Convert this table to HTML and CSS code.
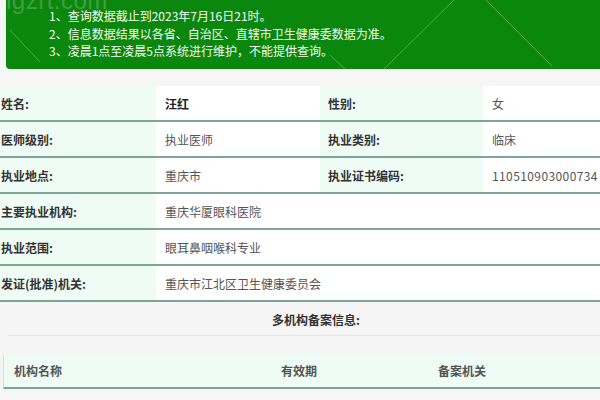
FILE: index.html
```html
<!DOCTYPE html>
<html lang="zh-CN">
<head>
<meta charset="utf-8">
<title>医师执业信息查询</title>
<link rel="stylesheet" href="styles.css">
</head>
<body>
<div class="notice">
  <svg class="notice-lines" width="600" height="69" viewBox="0 0 600 69" aria-hidden="true">
    <line x1="384" y1="69" x2="454" y2="0" />
    <line x1="486" y1="0" x2="552" y2="66" />
    <line x1="10" y1="30" x2="40" y2="62" />
    <line x1="330" y1="55" x2="345" y2="69" />
  </svg>
  <span class="watermark">ngzrt.com</span>
  <p>1、查询数据截止到2023年7月16日21时。</p>
  <p>2、信息数据结果以各省、自治区、直辖市卫生健康委数据为准。</p>
  <p>3、凌晨1点至凌晨5点系统进行维护，不能提供查询。</p>
</div>

<div class="info">
  <div class="row">
    <div class="label">姓名:</div>
    <div class="value strong">汪红</div>
    <div class="label label2">性别:</div>
    <div class="value">女</div>
  </div>
  <div class="row">
    <div class="label">医师级别:</div>
    <div class="value">执业医师</div>
    <div class="label label2">执业类别:</div>
    <div class="value">临床</div>
  </div>
  <div class="row">
    <div class="label">执业地点:</div>
    <div class="value">重庆市</div>
    <div class="label label2">执业证书编码:</div>
    <div class="value num">110510903000734</div>
  </div>
  <div class="row">
    <div class="label">主要执业机构:</div>
    <div class="value wide">重庆华厦眼科医院</div>
  </div>
  <div class="row">
    <div class="label">执业范围:</div>
    <div class="value wide">眼耳鼻咽喉科专业</div>
  </div>
  <div class="row">
    <div class="label">发证(批准)机关:</div>
    <div class="value wide">重庆市江北区卫生健康委员会</div>
  </div>

  <div class="multi">
    <div class="multi-title">多机构备案信息:</div>
    <div class="multi-head">
      <div class="mh-cell mh-name">机构名称</div>
      <div class="mh-cell mh-date">有效期</div>
      <div class="mh-cell mh-org">备案机关</div>
    </div>
  </div>
</div>
</body>
</html>
```

FILE: styles.css
```css
html, body {
  margin: 0;
  padding: 0;
}
body {
  width: 600px;
  height: 400px;
  overflow: hidden;
  background: #f6f6f6;
  font-family: "Noto Sans CJK SC", "Microsoft YaHei", sans-serif;
  font-size: 12px;
  color: #555;
}

.notice {
  position: relative;
  margin-left: 6px;
  margin-right: -10px;
  height: 69px;
  box-sizing: border-box;
  padding: 7px 0 0 43px;
  background: #0b870d;
  border-radius: 0 0 4px 4px;
  color: #f2fbf2;
  overflow: hidden;
}
.notice p {
  margin: 0;
  line-height: 17.5px;
  position: relative;
}
.notice-lines {
  position: absolute;
  left: -6px;
  top: 0;
}
.notice-lines line {
  stroke: rgba(190, 240, 190, 0.35);
  stroke-width: 1;
}
.watermark {
  position: absolute;
  left: -8px;
  top: -13px;
  font-family: "Liberation Sans", sans-serif;
  font-size: 24px;
  color: rgba(255, 255, 255, 0.22);
  letter-spacing: 0.5px;
}

.info {
  margin-top: 17px;
  margin-left: -9px;
  width: 656px;
}
.row {
  display: grid;
  grid-template-columns: 165px 164px 163px 1fr;
  height: 36px;
  box-sizing: border-box;
  border-bottom: 2px solid #7ea497;
}
.label {
  background: #effbf5;
  color: #333;
  font-weight: 600;
  padding-left: 10px;
  display: flex;
  align-items: center;
}
.value {
  background: #fff;
  padding-left: 9px;
  display: flex;
  align-items: center;
  color: #555;
}
.label2 {
  padding-left: 8px;
}
.value.strong {
  color: #222;
  font-weight: 700;
}
.value.num {
  font-size: 12px;
  letter-spacing: 0.4px;
}
.value.wide {
  grid-column: 2 / 5;
}

.multi {
  background: #f5f5f5;
}
.multi-title {
  height: 34px;
  box-sizing: border-box;
  border-bottom: 1px solid #e4e4e4;
  margin: 0 23px 0 17px;
  display: flex;
  align-items: center;
  justify-content: center;
  color: #333;
  font-weight: 600;
  padding-top: 2px;
}
.multi-head {
  margin-top: 18px;
  margin-left: 12px;
  height: 35px;
  box-sizing: border-box;
  background: #effbf5;
  border-left: 1px solid #cfe3da;
  border-bottom: 2px solid #7ea497;
  display: grid;
  grid-template-columns: 267px 157px 1fr;
  align-items: center;
  color: #555;
  font-weight: 600;
}
.mh-cell {
  padding-left: 10px;
}
```
